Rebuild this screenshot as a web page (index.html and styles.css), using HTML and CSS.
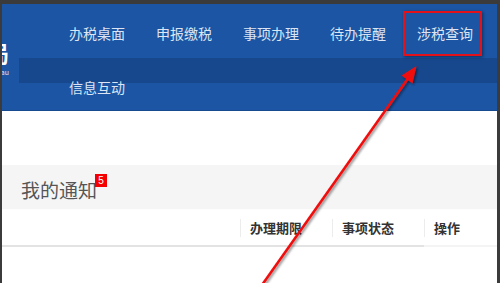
FILE: index.html
```html
<!DOCTYPE html>
<html lang="zh-CN">
<head>
<meta charset="utf-8">
<title>电子税务局</title>
<link rel="stylesheet" href="styles.css">
</head>
<body>
<div class="frame">
  <header class="topbar">
    <div class="logo">
      <span class="logo-main">税务局</span>
      <span class="logo-sub">tax bureau</span>
    </div>
    <nav class="nav">
      <a class="nav-item">办税桌面</a>
      <a class="nav-item">申报缴税</a>
      <a class="nav-item">事项办理</a>
      <a class="nav-item">待办提醒</a>
      <a class="nav-item">涉税查询</a>
      <a class="nav-item">信息互动</a>
    </nav>
    <div class="subband"></div>
  </header>

  <main class="content">
    <section class="notice">
      <h2 class="notice-title">我的通知<span class="badge">5</span></h2>
      <div class="table-head">
        <div class="col col-main"></div>
        <div class="col col-date"><span>办理期限</span></div>
        <div class="col col-status"><span>事项状态</span></div>
        <div class="col col-op"><span>操作</span></div>
      </div>
    </section>
  </main>

  <div class="highlight"></div>
  <svg class="arrow" width="500" height="283" viewBox="0 0 500 283">
    <defs>
      <filter id="sh" x="-20%" y="-20%" width="140%" height="140%">
        <feDropShadow dx="1.5" dy="1.5" stdDeviation="1" flood-color="#000" flood-opacity="0.45"/>
      </filter>
    </defs>
    <g filter="url(#sh)">
      <line x1="262" y1="285" x2="409" y2="77" stroke="#f01010" stroke-width="2.6"/>
      <polygon points="416.5,66 412.5,83.5 401.5,75.5" fill="#f01010"/>
    </g>
  </svg>
</div>
</body>
</html>
```

FILE: styles.css
```css
* { box-sizing: border-box; }

html, body {
  margin: 0;
  padding: 0;
  background: #3b3b3b;
  font-family: "Noto Sans CJK SC", "Noto Sans", "Liberation Sans", sans-serif;
}

.frame {
  position: relative;
  width: 500px;
  height: 283px;
  padding: 4px 3px 0 2px;
  overflow: hidden;
}

.topbar {
  position: relative;
  height: 107px;
  background: #1b55a4;
  border-bottom: 1px solid #164a91;
  display: flex;
  align-items: flex-start;
  overflow: hidden;
}

.logo {
  width: 7px;
  height: 100%;
  overflow: hidden;
  display: flex;
  flex-direction: column;
  align-items: flex-end;
  padding-top: 36px;
  color: #fff;
  position: relative;
  z-index: 1;
}

.logo-main {
  font-size: 22px;
  line-height: 24px;
  font-weight: bold;
  white-space: nowrap;
}

.logo-sub {
  margin-top: 4px;
  font-size: 7px;
  line-height: 9px;
  white-space: nowrap;
  color: #dfe7f3;
}

.nav {
  position: relative;
  z-index: 1;
  margin-left: 60px;
  margin-top: 2px;
  width: 420px;
  display: flex;
  flex-wrap: wrap;
  column-gap: 31px;
}

.nav-item {
  font-size: 14px;
  line-height: 54px;
  color: #dbe5f3;
  white-space: nowrap;
  width: 56px;
}

.subband {
  position: absolute;
  left: 17px;
  right: 0;
  top: 54px;
  height: 25px;
  background: #17478c;
}

.content {
  background: #fff;
  height: 172px;
  padding-top: 54px;
}

.notice-title {
  margin: 0;
  height: 45px;
  background: #f5f5f5;
  padding-left: 19px;
  font-size: 19px;
  font-weight: normal;
  color: #555;
  line-height: 50px;
  border-bottom: 1px solid #fdfdfd;
}

.badge {
  display: inline-block;
  vertical-align: top;
  margin-top: 9px;
  margin-left: -2px;
  width: 12px;
  height: 13px;
  background: #f40000;
  color: #fff;
  font-size: 10px;
  line-height: 13px;
  text-align: center;
  font-family: "Liberation Sans", sans-serif;
}

.table-head {
  display: flex;
  height: 37px;
}

.col {
  height: 37px;
  border-bottom: 2px solid #e3e3e3;
  display: flex;
  align-items: center;
  font-size: 13px;
  font-weight: bold;
  color: #333;
}

.col span {
  display: block;
  width: 100%;
  padding-left: 9px;
  border-left: 1px solid #ececec;
  line-height: 18px;
}

.col-main { width: 238px; }
.col-date { width: 92px; }
.col-status { width: 92px; }
.col-op { flex: 1; border-bottom-color: #f4f4f4; }

.highlight {
  position: absolute;
  left: 403px;
  top: 11px;
  width: 79px;
  height: 45px;
  border: 2px solid #e3121a;
  box-shadow: 1px 1px 3px rgba(0,0,0,0.45);
}

.arrow {
  position: absolute;
  left: 0;
  top: 0;
}
```
